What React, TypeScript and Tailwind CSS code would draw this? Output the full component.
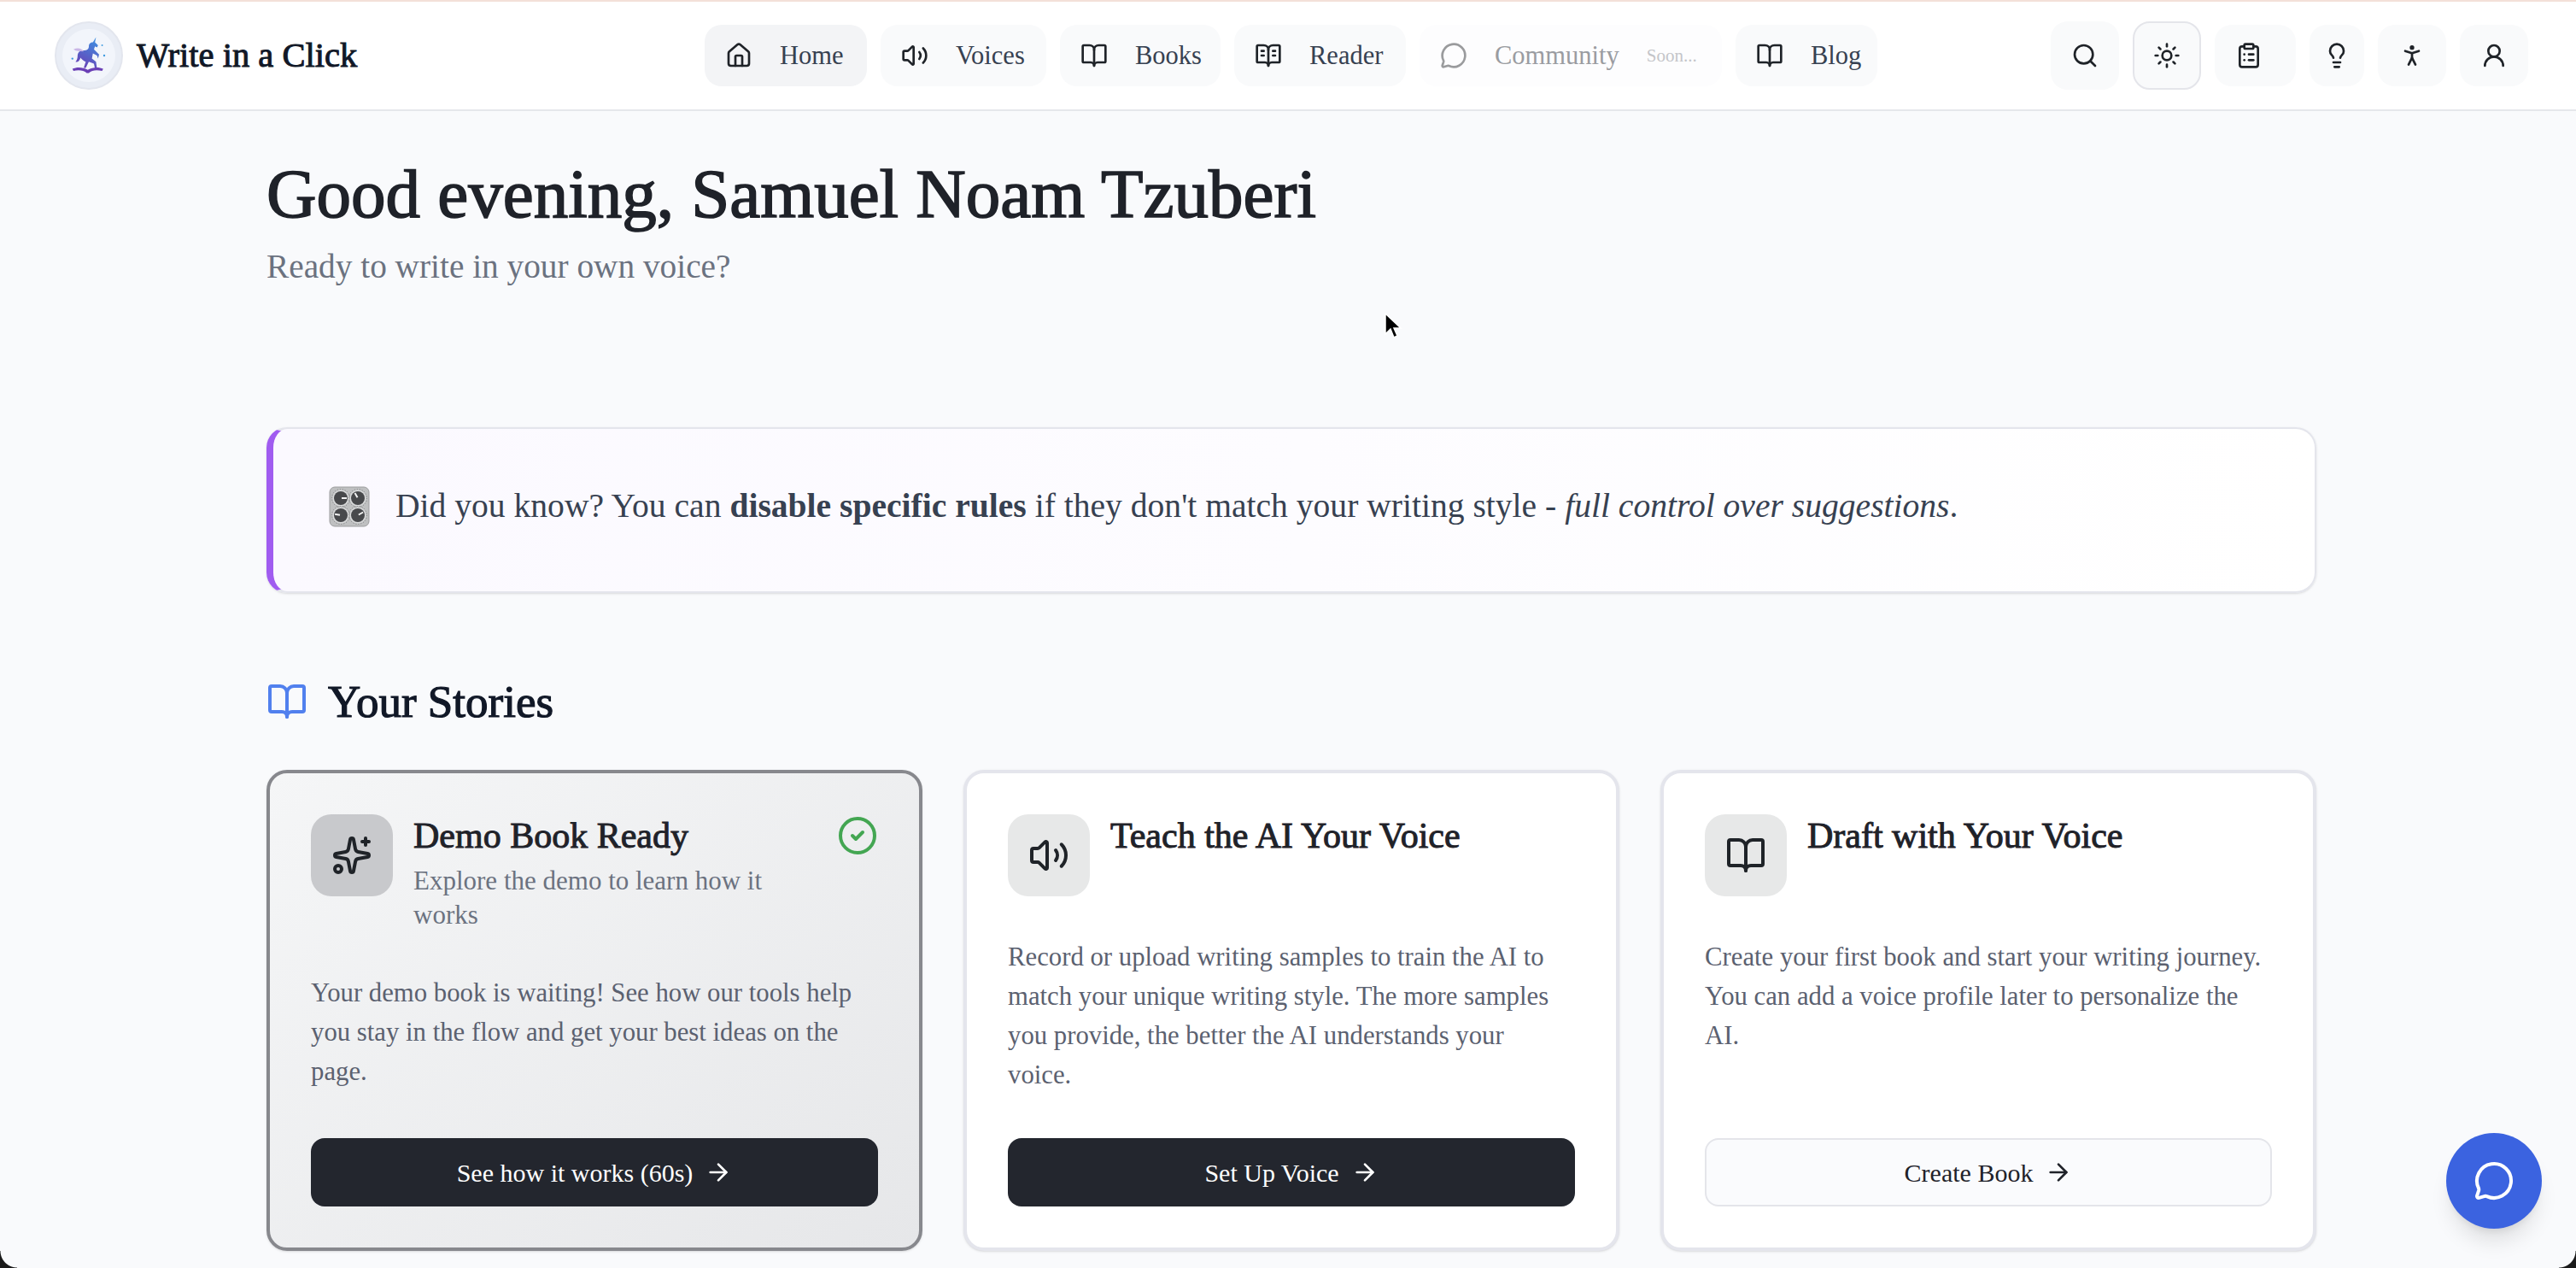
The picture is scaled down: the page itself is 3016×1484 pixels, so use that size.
import { ArrowRight, CircleCheck, House, Lightbulb, MessageCircle, PersonStanding, Search, Sparkles, Sun, UserRound, Volume2, ClipboardList } from 'lucide-react';
import type { ReactNode } from 'react';

const serif = "font-['Liberation_Serif',serif]";

function BookIcon({ className, dots }: { className?: string; dots?: boolean }) {
  return (
    <svg viewBox="0 0 24 24" fill="none" stroke="currentColor" strokeWidth="2" strokeLinecap="round" strokeLinejoin="round" className={className}>
      <path d="M12 7v14" />
      <path d="M3 18a1 1 0 0 1-1-1V4a1 1 0 0 1 1-1h5a4 4 0 0 1 4 4 4 4 0 0 1 4-4h5a1 1 0 0 1 1 1v13a1 1 0 0 1-1 1h-6a3 3 0 0 0-3 3 3 3 0 0 0-3-3z" />
      {dots && <path d="M6 8h2M6 12h2M16 8h2M16 12h2" />}
    </svg>
  );
}

function Logo() {
  return (
    <div className="flex h-20 w-20 shrink-0 items-center justify-center rounded-full border-2 border-[#e3e6ee] bg-[#e9edf5]">
      <div className="flex h-[62px] w-[62px] items-center justify-center rounded-full bg-[#f2f5fb]">
        <svg viewBox="0 0 40 40" className="h-12 w-12">
          <defs>
            <linearGradient id="uni" x1="0.7" y1="0" x2="0.3" y2="1">
              <stop offset="0" stopColor="#3f8ee0" />
              <stop offset="1" stopColor="#6a3fb5" />
            </linearGradient>
          </defs>
          <path d="M27 2l-3 5c-3 0-4 2-4 4 0 3-2 4-5 4-4 0-6 2-6 6 0 2-1 4-2 5 2 1 4-1 5-4 1 2 3 3 5 4l-2 6h2l3-6 5 2 1 5h2l-1-7-4-3 1-5 4 2 1 3 1-4-5-5 1-3 2 1 1-2-3-3z" fill="url(#uni)" />
          <path d="M4 33c4-2 10-2 15 1 5-3 11-3 15-1l-1 2c-5-1-10-1-13 2h-2c-3-3-9-3-13-2z" fill="#6a3fb5" />
          <path d="M5 14c4-2 8-1 10 2-4 0-7 0-10-2z" fill="#c9b6e6" />
          <circle cx="4" cy="23" r="1" fill="#3f9be0" />
          <circle cx="33" cy="10" r="0.8" fill="#3f9be0" />
          <circle cx="35" cy="20" r="1" fill="#3f9be0" />
        </svg>
      </div>
    </div>
  );
}

function NavItem({ icon, label, className }: { icon: ReactNode; label: string; className: string }) {
  return (
    <div className={`flex h-[72px] items-center gap-8 rounded-[20px] pl-6 text-[#1f2328] ${className}`}>
      {icon}
      <span className="text-[30.5px] leading-none text-[#374151]">{label}</span>
    </div>
  );
}

function IconButton({ children, className }: { children: ReactNode; className: string }) {
  return <div className={`flex items-center rounded-[20px] bg-[#f9fafb] text-[#1f2328] ${className}`}>{children}</div>;
}

function KnobsEmoji() {
  const knobs = [
    { x: 14, y: 14, a: 90 },
    { x: 34, y: 14, a: -30 },
    { x: 14, y: 34, a: -80 },
    { x: 34, y: 34, a: 60 },
  ];
  return (
    <svg viewBox="0 0 48 48" className="h-[50px] w-[48px] shrink-0">
      <rect x="1" y="1" width="46" height="46" rx="6" fill="#bfc0c1" stroke="#9c9d9e" />
      {knobs.map((k) => (
        <g key={k.a} transform={`translate(${k.x} ${k.y})`}>
          <circle r="10.5" fill="none" stroke="#77787a" strokeWidth="1" strokeDasharray="1 2" />
          <circle r="9.5" fill="#d9dadb" />
          <circle r="8" fill="#48494c" />
          <line y1="-1" y2="-7" stroke="#f3f3f3" strokeWidth="2" transform={`rotate(${k.a})`} />
        </g>
      ))}
    </svg>
  );
}

function Card(props: {
  icon: ReactNode;
  title: string;
  subtitle?: string;
  body: ReactNode;
  action: string;
  active?: boolean;
  outline?: boolean;
}) {
  const { icon, title, subtitle, body, action, active, outline } = props;
  return (
    <div
      className={`relative flex h-[563px] flex-col rounded-3xl border-4 p-12 shadow-sm ${
        active ? 'border-[#87888d] bg-gradient-to-br from-[#f5f6f7] to-[#e6e7e9]' : 'border-[#e4e5ec] bg-white'
      }`}
    >
      <div className="flex gap-6">
        <div className={`flex h-24 w-24 shrink-0 items-center justify-center rounded-3xl text-[#1f2328] ${active ? 'bg-[#c8c9cc]' : 'bg-[#e7e8e8]'}`}>
          {icon}
        </div>
        <div className="min-w-0 flex-1 pr-[72px]">
          <h3 className="text-[42px] leading-[50px] whitespace-nowrap text-[#1f2229] [-webkit-text-stroke:1px]">{title}</h3>
          {subtitle && <p className="mt-[8px] text-[31px] leading-10 text-[#6b7280]">{subtitle}</p>}
        </div>
      </div>
      {active && <CircleCheck className="absolute top-[49px] right-[48px] h-12 w-12 text-[#43a652]" strokeWidth={2} />}
      <p className="mt-12 text-[30.75px] leading-[46px] text-[#5b6170]">{body}</p>
      <div
        className={`mt-auto flex h-20 items-center justify-center gap-3.5 rounded-2xl text-[30px] ${
          outline ? 'border-2 border-[#e4e5ea] bg-[#fafbfd] text-[#1f2229]' : 'bg-[#23262e] text-white'
        }`}
      >
        <span>{action}</span>
        <ArrowRight className="h-8 w-8" strokeWidth={2} />
      </div>
    </div>
  );
}

export default function App() {
  return (
    <div className={`relative h-[1484px] w-[3016px] overflow-hidden bg-[#f9fafc] ${serif}`}>
      <div className="h-[2px] bg-[#f3e0d8]" />
      <header className="relative flex h-[128px] items-center border-b-2 border-[#e5e7eb] bg-white pl-16">
        <div className="flex w-[761px] items-center gap-4">
          <Logo />
          <span className="text-[40.5px] leading-none text-[#111827] [-webkit-text-stroke:1px]">Write in a Click</span>
        </div>
        <nav className="flex gap-4">
          <NavItem className="w-[190px] bg-[#f3f4f6]" icon={<House className="h-8 w-8 shrink-0" />} label="Home" />
          <NavItem className="w-[194px] bg-[#f9fafb]" icon={<Volume2 className="h-8 w-8 shrink-0" />} label="Voices" />
          <NavItem className="w-[188px] bg-[#f9fafb]" icon={<BookIcon className="h-8 w-8 shrink-0" />} label="Books" />
          <NavItem className="w-[201px] bg-[#f9fafb]" icon={<BookIcon dots className="h-8 w-8 shrink-0" />} label="Reader" />
          <div className="flex h-[72px] w-[354px] items-center gap-8 rounded-[20px] bg-[#fdfdfe] pl-6">
            <MessageCircle className="h-8 w-8 shrink-0 text-[#9a9b9d]" />
            <span className="text-[30.5px] leading-none text-[#9a9ca1]">Community</span>
            <span className="text-[21px] leading-none text-[#c4c5c9]">Soon...</span>
          </div>
          <NavItem className="w-[166px] bg-[#f9fafb]" icon={<BookIcon className="h-8 w-8 shrink-0" />} label="Blog" />
        </nav>
        <div className="ml-auto mr-14 flex items-center gap-4">
          <IconButton className="h-20 w-20 justify-center"><Search className="h-8 w-8" /></IconButton>
          <IconButton className="h-20 w-20 justify-center border-2 border-[#e4e5ea]"><Sun className="h-8 w-8" /></IconButton>
          <IconButton className="h-[72px] w-[95px] pl-6"><ClipboardList className="h-8 w-8" /></IconButton>
          <IconButton className="h-[72px] w-16 justify-center"><Lightbulb className="h-8 w-8" /></IconButton>
          <IconButton className="h-[72px] w-20 justify-center"><PersonStanding className="h-8 w-8" /></IconButton>
          <IconButton className="h-[72px] w-20 justify-center"><UserRound className="h-8 w-8" /></IconButton>
        </div>
      </header>

      <main className="ml-[312px] w-[2400px]">
        <h1 className="mt-[52px] text-[81px] leading-[90px] whitespace-nowrap text-[#1f2229] [-webkit-text-stroke:1.6px]">Good evening, Samuel Noam Tzuberi</h1>
        <p className="mt-[14px] text-[39.3px] leading-[52px] text-[#6b7280]">Ready to write in your own voice?</p>

        <div className="mt-[162px] flex h-[194px] items-center gap-[30px] rounded-3xl border-2 border-l-8 border-[#e4e5ec] border-l-[#a05cf0] bg-gradient-to-r from-[#fbf9ff] to-white pb-2 pl-[65px] shadow-sm">
          <KnobsEmoji />
          <p className="text-[39.6px] text-[#374151]">
            Did you know? You can <strong className="font-bold">disable specific rules</strong> if they don't match your writing style - <em>full control over suggestions</em>.
          </p>
        </div>

        <div className="mt-[103px] flex items-center gap-6">
          <BookIcon className="h-12 w-12 text-[#5180ee]" />
          <h2 className="text-[53px] leading-[44px] text-[#111827] [-webkit-text-stroke:1.2px]">Your Stories</h2>
        </div>

        <div className="mt-[56px] grid grid-cols-3 gap-12">
          <Card
            active
            icon={<Sparkles className="h-12 w-12" />}
            title="Demo Book Ready"
            subtitle="Explore the demo to learn how it works"
            body="Your demo book is waiting! See how our tools help you stay in the flow and get your best ideas on the page."
            action="See how it works (60s)"
          />
          <Card
            icon={<Volume2 className="h-12 w-12" />}
            title="Teach the AI Your Voice"
            body={<>Record or upload writing samples to train the AI to match your unique writing style. The more samples you provide, the better the AI understands your<br />voice.</>}
            action="Set Up Voice"
          />
          <Card
            outline
            icon={<BookIcon className="h-12 w-12" />}
            title="Draft with Your Voice"
            body={<>Create your first book and start your writing journey. You can add a voice profile later to personalize the<br />AI.</>}
            action="Create Book"
          />
        </div>
      </main>

      <div className="absolute top-[1326px] left-[2864px] flex h-28 w-28 items-center justify-center rounded-full bg-[#3b63e0] text-white shadow-xl">
        <MessageCircle className="h-12 w-12" />
      </div>

      <svg viewBox="0 0 24 32" className="absolute top-[366px] left-[1620px] h-8 w-6">
        <path d="M2 1v24l6-6 4 10 4-2-4-9h8z" fill="#000" stroke="#fff" strokeWidth="1.5" />
      </svg>

      {/* window corners */}
      <div className="absolute right-0 bottom-0 h-5 w-5 bg-[radial-gradient(circle_at_top_left,transparent_19px,#1a1a1a_20px)]" />
      <div className="absolute bottom-0 left-0 h-5 w-5 bg-[radial-gradient(circle_at_top_right,transparent_19px,#1a1a1a_20px)]" />
    </div>
  );
}
